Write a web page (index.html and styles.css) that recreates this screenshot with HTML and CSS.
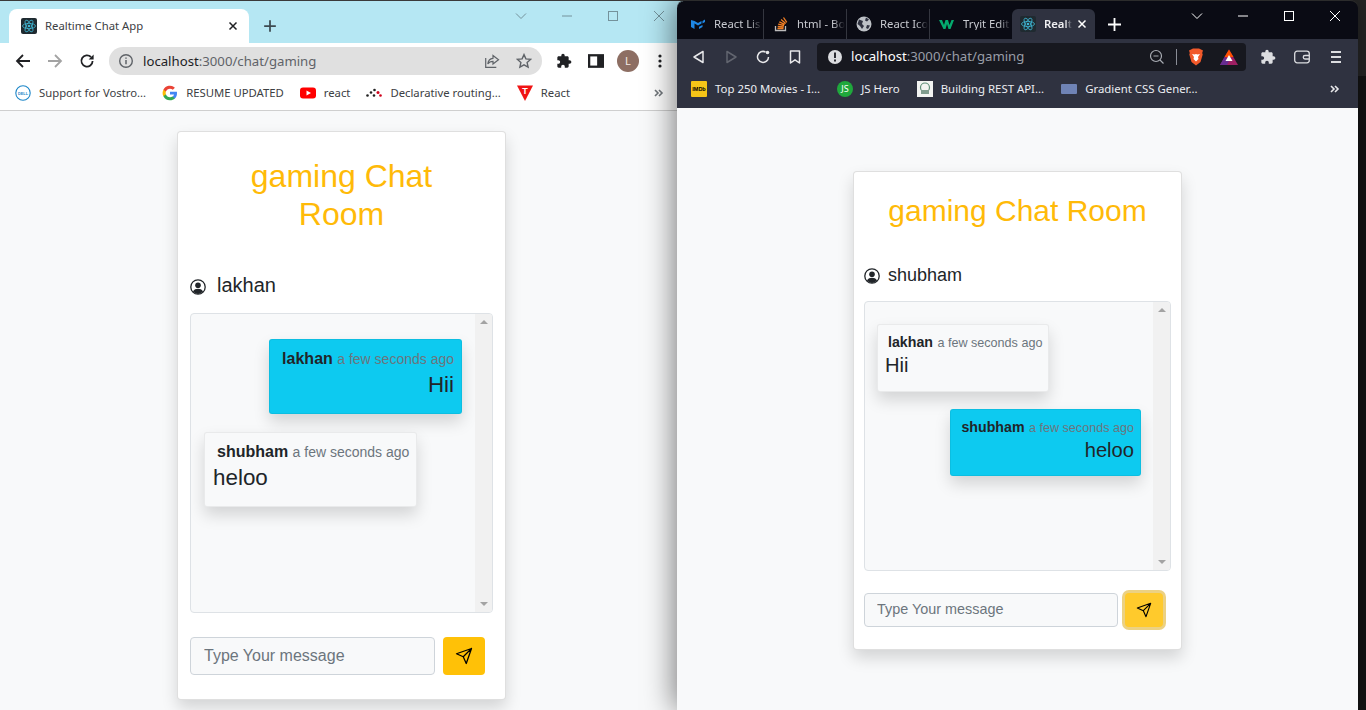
FILE: index.html
```html
<!DOCTYPE html>
<html lang="en">
<head>
<meta charset="utf-8">
<title>Realtime Chat App</title>
<link rel="stylesheet" href="styles.css">
</head>
<body>
<svg class="defs" width="0" height="0" aria-hidden="true">
  <symbol id="react" viewBox="0 0 16 16">
    <rect width="16" height="16" rx="2" fill="#1f2a30"/>
    <g fill="none" stroke="#3fb6d3" stroke-width=".8">
      <ellipse cx="8" cy="8" rx="6.5" ry="2.6"/>
      <ellipse cx="8" cy="8" rx="6.5" ry="2.6" transform="rotate(60 8 8)"/>
      <ellipse cx="8" cy="8" rx="6.5" ry="2.6" transform="rotate(120 8 8)"/>
    </g>
    <circle cx="8" cy="8" r="1.3" fill="#3fb6d3"/>
  </symbol>
  <symbol id="puzzle" viewBox="0 0 24 24">
    <path d="M20.5 11H19V7c0-1.1-.9-2-2-2h-4V3.5C13 2.12 11.88 1 10.5 1S8 2.12 8 3.5V5H4c-1.1 0-1.99.9-1.99 2v3.8H3.5c1.49 0 2.7 1.21 2.7 2.7s-1.21 2.7-2.7 2.7H2V20c0 1.1.9 2 2 2h3.8v-1.5c0-1.49 1.21-2.7 2.7-2.7 1.49 0 2.7 1.21 2.7 2.7V22H17c1.1 0 2-.9 2-2v-4h1.5c1.38 0 2.5-1.12 2.5-2.5S21.88 11 20.5 11z" fill="currentColor"/>
  </symbol>
  <symbol id="user" viewBox="0 0 16 16">
    <circle cx="8" cy="8" r="7.2" fill="#fff" stroke="#212529" stroke-width="1.3"/>
    <circle cx="8" cy="6.2" r="2.8" fill="#212529"/>
    <path d="M2.9 12.6C4 10.5 6 9.8 8 9.8s4 .7 5.1 2.8A7 7 0 0 1 8 15a7 7 0 0 1-5.1-2.4z" fill="#212529"/>
  </symbol>
  <symbol id="send" viewBox="0 0 24 24">
    <path d="M22 2 11 13M22 2l-7 20-4-9-9-4z" fill="none" stroke="currentColor" stroke-width="1.7" stroke-linejoin="round" stroke-linecap="round"/>
  </symbol>
  <symbol id="chev" viewBox="0 0 12 12"><path d="M1 3.5l5 5 5-5" fill="none" stroke="currentColor"/></symbol>
  <symbol id="min" viewBox="0 0 12 12"><path d="M1 6h10" fill="none" stroke="currentColor"/></symbol>
  <symbol id="max" viewBox="0 0 12 12"><rect x="1.5" y="1.5" width="9" height="9" fill="none" stroke="currentColor"/></symbol>
  <symbol id="close" viewBox="0 0 12 12"><path d="M1 1l10 10M11 1L1 11" fill="none" stroke="currentColor"/></symbol>
  <symbol id="more" viewBox="0 0 10 10"><path d="M1 2l3 3-3 3M5 2l3 3-3 3" fill="none" stroke="currentColor" stroke-width="1.6"/></symbol>
</svg>

<main class="desktop">

  <section class="window window-light">
    <div class="strip strip-light">
      <div class="tab-light">
        <svg class="ico16"><use href="#react"/></svg>
        <span class="tab-light-title">Realtime Chat App</span>
        <svg class="tab-x" viewBox="0 0 10 10"><path d="M1.5 1.5l7 7M8.5 1.5l-7 7" stroke="#202124" stroke-width="1.5"/></svg>
      </div>
      <svg class="plus plus-light" viewBox="0 0 12 12"><path d="M6 1v10M1 6h10" stroke="#3c4a50" stroke-width="1.5"/></svg>
      <div class="spacer"></div>
      <div class="controls controls-light">
        <span class="ctl"><svg class="ico12"><use href="#chev"/></svg></span>
        <span class="ctl"><svg class="ico12"><use href="#min"/></svg></span>
        <span class="ctl"><svg class="ico12"><use href="#max"/></svg></span>
        <span class="ctl"><svg class="ico12"><use href="#close"/></svg></span>
      </div>
    </div>
    <div class="toolbar toolbar-light">
      <span class="btn"><svg class="ico16" viewBox="0 0 16 16"><path d="M15 8H2M8 2L2 8l6 6" fill="none" stroke="#202124" stroke-width="1.8"/></svg></span>
      <span class="btn"><svg class="ico16" viewBox="0 0 16 16"><path d="M1 8h13M8 2l6 6-6 6" fill="none" stroke="#a3a3a3" stroke-width="1.8"/></svg></span>
      <span class="btn"><svg class="ico16" viewBox="0 0 16 16"><path d="M13.6 8a5.6 5.6 0 1 1-1.6-4" fill="none" stroke="#202124" stroke-width="1.8"/><path d="M14.6 1.4v5h-5z" fill="#202124"/></svg></span>
      <div class="omni omni-light">
        <svg class="ico16 omni-ico" viewBox="0 0 16 16"><circle cx="8" cy="8" r="6.3" fill="none" stroke="#5f6368" stroke-width="1.4"/><path d="M8 7v4.2M8 4.4v1.4" stroke="#5f6368" stroke-width="1.5"/></svg>
        <span class="url url-light"><span class="url-host-light">localhost</span>:3000/chat/gaming</span>
        <span class="btn"><svg class="ico16" viewBox="0 0 16 16"><path d="M9 2.5l5.5 4.3L9 11V8.3c-2.6 0-4 .8-5.2 2.7.3-3.2 2-5.4 5.2-5.7zM1.7 5v9.3h10.6" fill="none" stroke="#5f6368" stroke-width="1.2"/></svg></span>
        <span class="btn"><svg class="ico16" viewBox="0 0 16 16"><path d="M8 1.6l1.9 4.3 4.7.5-3.5 3.1 1 4.6L8 11.8l-4.1 2.3 1-4.6L1.4 6.4l4.7-.5z" fill="none" stroke="#5f6368" stroke-width="1.4"/></svg></span>
      </div>
      <div class="tool-right">
        <span class="btn btn-dark"><svg class="ico16"><use href="#puzzle"/></svg></span>
        <span class="btn"><svg class="ico16" viewBox="0 0 14 14"><rect x="0" y="1" width="14" height="12" fill="#202124"/><rect x="2" y="3" width="6" height="8" fill="#fff"/></svg></span>
        <span class="btn"><span class="avatar">L</span></span>
        <span class="btn"><svg class="ico16" viewBox="0 0 16 16"><circle cx="8" cy="3" r="1.6" fill="#202124"/><circle cx="8" cy="8" r="1.6" fill="#202124"/><circle cx="8" cy="13" r="1.6" fill="#202124"/></svg></span>
      </div>
    </div>
    <div class="bookmarks bookmarks-light">
      <span class="mark">
        <svg class="ico16" viewBox="0 0 16 16"><circle cx="8" cy="8" r="7.2" fill="#fff" stroke="#1c86c8" stroke-width="1.1"/><text x="8" y="9.8" class="svg-dell">DELL</text></svg>
        <span>Support for Vostro...</span>
      </span>
      <span class="mark">
        <svg class="ico16" viewBox="0 0 16 16">
          <path d="M15 8.2c0-.5 0-1-.1-1.4H8v2.8h4a3.400 3.400 0 0 1-1.500 2.200v1.800h2.400C14.200 12.400 15 10.500 15 8.200z" fill="#4285f4"/>
          <path d="M8 15.200c2 0 3.600-.7 4.900-1.800l-2.400-1.800c-.7.400-1.500.7-2.500.7-1.900 0-3.500-1.300-4.100-3H1.400v1.900A7.200 7.200 0 0 0 8 15.200z" fill="#34a853"/>
          <path d="M3.900 9.300a4.300 4.300 0 0 1 0-2.700V4.700H1.400a7.200 7.200 0 0 0 0 6.500z" fill="#fbbc05"/>
          <path d="M8 3.700c1.100 0 2 .4 2.800 1.100l2.100-2.100A7.200 7.200 0 0 0 1.400 4.700l2.500 1.900c.6-1.700 2.200-2.900 4.100-2.900z" fill="#ea4335"/>
        </svg>
        <span>RESUME UPDATED</span>
      </span>
      <span class="mark">
        <svg class="ico16" viewBox="0 0 16 16"><rect x="0" y="2.500" width="16" height="11" rx="3" fill="#f00"/><path d="M6.500 5.500v5L11 8z" fill="#fff"/></svg>
        <span>react</span>
      </span>
      <span class="mark">
        <svg class="ico16" viewBox="0 0 16 16"><circle cx="1.500" cy="10.500" r="1.300" fill="#222"/><circle cx="5" cy="7.500" r="1.300" fill="#222"/><circle cx="8.500" cy="5" r="1.300" fill="#222"/><circle cx="8" cy="10.500" r="1.300" fill="#222"/><circle cx="12" cy="7.500" r="1.500" fill="#d0021b"/><circle cx="14.500" cy="10.500" r="1.300" fill="#d0021b"/></svg>
        <span>Declarative routing...</span>
      </span>
      <span class="mark">
        <svg class="ico16" viewBox="0 0 16 16"><path d="M0 .5h16L8 16z" fill="#f01414"/><text x="8" y="8.500" class="svg-t">T</text></svg>
        <span>React</span>
      </span>
      <div class="spacer"></div>
      <svg class="more more-light"><use href="#more"/></svg>
    </div>
    <div class="page page-left">
      <article class="card">
        <h2 class="room-title">gaming Chat Room</h2>
        <div class="user-row">
          <svg class="user-ico"><use href="#user"/></svg>
          <span>lakhan</span>
        </div>
        <div class="chat-box">
          <div class="messages">
            <div class="bubble bubble-own">
              <div class="meta"><b class="who">lakhan</b> <span class="when">a few seconds ago</span></div>
              <div class="text">Hii</div>
            </div>
            <div class="bubble bubble-other">
              <div class="meta"><b class="who">shubham</b> <span class="when">a few seconds ago</span></div>
              <div class="text">heloo</div>
            </div>
          </div>
          <div class="scrollbar"><i class="arrow-up"></i><i class="arrow-down"></i></div>
        </div>
        <div class="composer">
          <input class="composer-input" type="text" placeholder="Type Your message">
          <button class="send" type="button"><svg class="send-ico"><use href="#send"/></svg></button>
        </div>
      </article>
    </div>
  </section>

  <section class="window window-dark">
    <div class="strip strip-dark">
      <div class="tab-dark">
        <svg class="ico16" viewBox="0 0 16 16"><path d="M1 4v7l3.500 2V7.500L8 9.500l3.500-2V5L8 7 4.500 5zM12.500 5v2.500L15 6V3.500zM12.500 9v2L9 13v-2.300z" fill="#1e88e5"/></svg>
        <span class="tab-dark-title">React Lis</span>
      </div>
      <div class="tab-dark">
        <svg class="ico16" viewBox="0 0 16 16"><path d="M2.500 10v4.500h10V10" fill="none" stroke="#bcbbbb" stroke-width="1.300"/><path d="M4.500 12.500h6M4.700 10.500l6 .5M5.200 8.200l5.900 1.300M6.300 5.800l5.400 2.600M8.100 3.500l4.600 3.900M10.500 1.500l3.300 4.900" stroke="#f48024" stroke-width="1.300" fill="none"/></svg>
        <span class="tab-dark-title">html - Bo</span>
      </div>
      <div class="tab-dark">
        <svg class="ico16" viewBox="0 0 16 16"><circle cx="8" cy="8" r="7.500" fill="#bdc1c6"/><path d="M3 3.500l4 1.500-1 3 2 2-2 3-2-3-2.500-2zM10 1.500l3 2-2 2-2-1zM11 9l3 .5-2 3.500-2-1z" fill="#2f3240"/></svg>
        <span class="tab-dark-title">React Ico</span>
      </div>
      <div class="tab-dark">
        <svg class="ico16" viewBox="0 0 16 16"><path d="M0 4h3l2 5 1.500-5h2.500l1.500 5 2-5H15l-3.500 9H9.500L8 8l-1.500 5h-2z" fill="#04aa6d"/></svg>
        <span class="tab-dark-title">Tryit Edit</span>
      </div>
      <div class="tab-dark tab-dark-active">
        <svg class="ico16"><use href="#react"/></svg>
        <span class="tab-dark-title tab-active-title">Realt</span>
        <svg class="tab-x tab-x-dark" viewBox="0 0 10 10"><path d="M1.500 1.500l7 7M8.500 1.500l-7 7" stroke="#fff" stroke-width="1.500"/></svg>
      </div>
      <svg class="plus plus-dark" viewBox="0 0 12 12"><path d="M6 0v12M0 6h12" stroke="#fff" stroke-width="1.700"/></svg>
      <div class="spacer"></div>
      <div class="controls controls-dark">
        <span class="ctl"><svg class="ico12"><use href="#chev"/></svg></span>
        <span class="ctl"><svg class="ico12"><use href="#min"/></svg></span>
        <span class="ctl"><svg class="ico12"><use href="#max"/></svg></span>
        <span class="ctl"><svg class="ico12"><use href="#close"/></svg></span>
      </div>
    </div>
    <div class="toolbar toolbar-dark">
      <span class="btn"><svg class="ico16" viewBox="0 0 16 16"><path d="M12 2.500v11L3 8z" fill="none" stroke="#e8e8ea" stroke-width="1.500" stroke-linejoin="round"/></svg></span>
      <span class="btn"><svg class="ico16" viewBox="0 0 16 16"><path d="M4 2.500v11L13 8z" fill="none" stroke="#62656f" stroke-width="1.500" stroke-linejoin="round"/></svg></span>
      <span class="btn"><svg class="ico16" viewBox="0 0 16 16"><path d="M13.500 8A5.500 5.500 0 1 1 10.500 3" fill="none" stroke="#e8e8ea" stroke-width="1.500"/><circle cx="12.500" cy="3.500" r="1.800" fill="#e8e8ea"/></svg></span>
      <span class="btn"><svg class="ico16" viewBox="0 0 16 16"><path d="M3.500 2h9v12L8 10.800 3.500 14z" fill="none" stroke="#e8e8ea" stroke-width="1.500" stroke-linejoin="round"/></svg></span>
      <div class="omni omni-dark">
        <svg class="ico16 omni-ico-dark" viewBox="0 0 16 16"><circle cx="8" cy="8" r="7" fill="#dcdde0"/><path d="M8 3.500v5.500M8 10.500v2" stroke="#17181f" stroke-width="1.800"/></svg>
        <span class="url url-dark"><span class="url-host-dark">localhost</span>:3000/chat/gaming</span>
        <span class="btn"><svg class="ico16" viewBox="0 0 16 16"><circle cx="7" cy="7" r="5.500" fill="none" stroke="#a8abb2" stroke-width="1.200"/><path d="M4.500 7h5M11 11l3.500 3.500" stroke="#a8abb2" stroke-width="1.200"/></svg></span>
        <i class="omni-sep"></i>
        <span class="btn btn-brave"><svg class="ico18" viewBox="0 0 16 18"><path d="M3 1.500L5 .5h6l2 1 2 1-.8 2.500.5 1.500L12.500 14 8 17.500 3.500 14 1.300 6.500 1.800 5 1 2.500z" fill="#f1592a"/><path d="M4 6l2.500.5L8 6l1.500.5L12 6l-2 3 .5 2L8 13.500 5.500 11l.5-2z" fill="#fff"/></svg></span>
        <span class="btn"><svg class="ico18" viewBox="0 0 18 16"><path d="M9 .5L18 16H0z" fill="#9e1f63"/><path d="M9 .5L13.500 8h-9z" fill="#ff5000"/><path d="M0 16l4.500-8L9 12l-2 4z" fill="#662d91"/><path d="M9 6l3.500 6h-7z" fill="#fff"/></svg></span>
      </div>
      <div class="tool-right-dark">
        <span class="btn-wide btn-light"><svg class="ico16"><use href="#puzzle"/></svg></span>
        <span class="btn-wide"><svg class="ico16" viewBox="0 0 16 16"><rect x=".7" y="2.200" width="14.600" height="11.600" rx="2.500" fill="none" stroke="#dcdde0" stroke-width="1.300"/><path d="M15 6.500H11a1.500 1.500 0 0 0 0 3.500h4" fill="none" stroke="#dcdde0" stroke-width="1.300"/></svg></span>
        <span class="btn-wide"><svg class="ico16" viewBox="0 0 16 16"><path d="M3 3h10M3 8h10M3 13h10" stroke="#dcdde0" stroke-width="1.800"/></svg></span>
      </div>
    </div>
    <div class="bookmarks bookmarks-dark">
      <span class="mark">
        <svg class="ico16" viewBox="0 0 16 16"><rect width="16" height="16" rx="1" fill="#f5c518"/><text x="8" y="10" class="svg-imdb">IMDb</text></svg>
        <span>Top 250 Movies - I...</span>
      </span>
      <span class="mark">
        <svg class="ico16" viewBox="0 0 16 16"><circle cx="8" cy="8" r="8" fill="#1fa83c"/><text x="8" y="11" class="svg-js">JS</text></svg>
        <span>JS Hero</span>
      </span>
      <span class="mark">
        <svg class="ico16" viewBox="0 0 16 16"><rect width="16" height="16" fill="#f2f4f2"/><circle cx="8" cy="6.500" r="4.500" fill="none" stroke="#5e8f78" stroke-width="1.200"/><rect x="4" y="9" width="8" height="4" fill="#7f9c8e"/></svg>
        <span>Building REST API...</span>
      </span>
      <span class="mark">
        <svg class="ico16" viewBox="0 0 16 16"><rect x="0" y="3" width="16" height="10" rx="1" fill="#6f83b5"/></svg>
        <span>Gradient CSS Gener...</span>
      </span>
      <div class="spacer"></div>
      <svg class="more more-dark"><use href="#more"/></svg>
    </div>
    <div class="page page-right">
      <article class="card card-small">
        <h2 class="room-title room-title-small">gaming Chat Room</h2>
        <div class="user-row user-row-small">
          <svg class="user-ico"><use href="#user"/></svg>
          <span>shubham</span>
        </div>
        <div class="chat-box chat-box-small">
          <div class="messages messages-small">
            <div class="bubble bubble-other bubble-small">
              <div class="meta"><b class="who">lakhan</b> <span class="when">a few seconds ago</span></div>
              <div class="text">Hii</div>
            </div>
            <div class="bubble bubble-own bubble-small">
              <div class="meta"><b class="who">shubham</b> <span class="when">a few seconds ago</span></div>
              <div class="text">heloo</div>
            </div>
          </div>
          <div class="scrollbar"><i class="arrow-up"></i><i class="arrow-down"></i></div>
        </div>
        <div class="composer composer-small">
          <input class="composer-input" type="text" placeholder="Type Your message">
          <button class="send send-focus" type="button"><svg class="send-ico"><use href="#send"/></svg></button>
        </div>
      </article>
    </div>
  </section>

</main>
</body>
</html>
```

FILE: styles.css
```css
* { box-sizing: border-box; }
html, body { margin: 0; height: 100%; overflow: hidden; }
body { font-family: "Liberation Sans", Arial, sans-serif; color: #212529; }
.defs { position: absolute; }

.desktop {
  position: relative;
  width: 1366px;
  height: 710px;
  overflow: hidden;
  background: linear-gradient(#262626 76px, #141414 76px);
}
.window {
  position: absolute;
  top: 0;
  height: 710px;
  display: flex;
  flex-direction: column;
}
.window-light { left: 0; width: 683px; border-top: 1px solid #3a3a3a; }
.window-dark {
  left: 677px;
  width: 681px;
  border-top: 1px solid #2c2c2c;
  border-radius: 8px 8px 0 0;
  overflow: hidden;
  box-shadow: -3px 0 30px rgba(0, 0, 0, .5);
}

.spacer { flex: 1; }
.ico16 { width: 16px; height: 16px; flex: none; }
.ico12 { width: 12px; height: 12px; }
.ico18 { width: 18px; height: 18px; flex: none; }

.strip { display: flex; align-items: flex-end; flex: none; }
.strip-light { height: 42px; background: #b5e7f3; }
.strip-dark { height: 38px; background: #0a0b14; }

.tab-light {
  width: 240px;
  height: 34px;
  margin-left: 9px;
  padding: 0 11px 0 12px;
  display: flex;
  align-items: center;
  background: #fff;
  border-radius: 8px 8px 0 0;
  font: 11.3px/1 "Noto Sans", sans-serif;
  color: #3c4043;
}
.tab-light-title { flex: 1; margin-left: 8px; }
.tab-x { width: 10px; height: 10px; flex: none; }
.plus { flex: none; align-self: center; }
.plus-light { width: 14px; height: 14px; margin: 8px 0 0 14px; }
.plus-dark { width: 13px; height: 13px; margin: 8px 0 0 13px; }

.controls { display: flex; align-self: flex-start; height: 30px; margin-top: 0; }
.controls-light { color: #74929b; margin-right: 1px; }
.controls-dark { color: #fff; }
.ctl { width: 46px; height: 30px; display: flex; align-items: center; justify-content: center; }

.tab-dark {
  width: 83px;
  height: 30px;
  padding-left: 9px;
  display: flex;
  align-items: center;
  font: 11.3px/1 "Noto Sans", sans-serif;
  color: #c8cad0;
  border-right: 1px solid #34363f;
}
.tab-dark:first-child { margin-left: 4px; }
.tab-dark:nth-child(4) { border-right: 0; }
.tab-dark-title {
  margin-left: 8px;
  white-space: nowrap;
  width: 48px;
  -webkit-mask-image: linear-gradient(90deg, #000 75%, transparent);
  mask-image: linear-gradient(90deg, #000 75%, transparent);
}
.tab-dark-active {
  background: #2f3240;
  border-right: 0;
  border-radius: 6px 6px 0 0;
  margin-left: -1px;
  padding-left: 8px;
  font-weight: 600;
  color: #f0f0f2;
}
.tab-active-title { width: 28px; flex: none; }
.tab-x-dark { margin-left: 5px; }

.toolbar { display: flex; align-items: center; flex: none; padding-top: 3px; }
.toolbar-light { height: 33px; padding-left: 7px; background: #fff; }
.toolbar-dark { height: 33px; padding-left: 6px; background: #2f3240; }
.btn { width: 32px; height: 28px; display: flex; align-items: center; justify-content: center; flex: none; }
.btn-wide { width: 34px; height: 28px; display: flex; align-items: center; justify-content: center; flex: none; }
.btn-dark { color: #202124; }
.btn-light { color: #dcdde0; }
.btn-brave { width: 34px; }

.omni { display: flex; align-items: center; height: 28px; margin-left: 6px; flex: none; }
.omni-light { width: 433px; padding: 0 2px 0 9px; background: #e0e0e0; border-radius: 14px; }
.omni-dark { width: 429px; padding: 0 1px 0 10px; background: #17181f; border-radius: 4px; }
.url { flex: 1; font: 13.2px/1 "Noto Sans", sans-serif; white-space: nowrap; }
.url-light { margin: 2px 0 0 9px; color: #5f6368; }
.url-host-light { color: #202124; }
.url-dark { margin-left: 8px; color: #9a9ea8; }
.url-host-dark { color: #fff; }
.omni-sep { width: 1px; height: 16px; margin: 0 2px 0 3px; background: #8a8d96; flex: none; }

.tool-right { display: flex; margin-left: 6px; }
.tool-right-dark { display: flex; margin-left: 5px; }
.avatar {
  width: 22px;
  height: 22px;
  border-radius: 50%;
  background: #8d6e63;
  color: #f3e9e4;
  font: 11px/22px "Noto Sans", sans-serif;
  text-align: center;
}

.bookmarks {
  display: flex;
  align-items: center;
  flex: none;
  font: 11.3px/1 "Noto Sans", sans-serif;
  white-space: nowrap;
}
.bookmarks-light { height: 35px; padding-left: 15px; background: #fff; border-bottom: 1px solid #cfcfcf; color: #3c4043; }
.bookmarks-dark { height: 36px; padding: 0 0 2px 14px; background: #2f3240; color: #eceef2; font-size: 11.4px; }
.mark { display: flex; align-items: center; gap: 8px; margin-right: 16px; }
.bookmarks-dark .mark { margin-right: 17px; }
.more { width: 10px; height: 10px; flex: none; }
.more-light { color: #70757a; margin-right: 19px; }
.more-dark { color: #e8e8ea; margin-right: 18px; }
.svg-dell { font: bold 3.8px "Liberation Sans", sans-serif; fill: #1c86c8; text-anchor: middle; }
.svg-t { font: bold 9px "Liberation Sans", sans-serif; fill: #fff; text-anchor: middle; }
.svg-imdb { font: bold 5.5px "Liberation Sans", sans-serif; fill: #000; text-anchor: middle; }
.svg-js { font: 9px "Noto Sans", sans-serif; fill: #fff; text-anchor: middle; }

.page { flex: 1; min-height: 0; background: #f8f9fa; display: flex; justify-content: center; align-items: flex-start; }
.page-left { padding-top: 20px; }
.page-right { padding-top: 63px; }

.card {
  width: 329px;
  padding: 0 12px 24px;
  background: #fff;
  border: 1px solid rgba(0, 0, 0, .125);
  border-radius: 4px;
  box-shadow: 0 8px 16px rgba(0, 0, 0, .15);
  flex: none;
}
.card-small { padding: 0 10px 22px; }

.room-title {
  margin: 0;
  padding: 25px 40px 37px;
  font-size: 32px;
  line-height: 38.4px;
  font-weight: 400;
  text-align: center;
  color: #ffba08;
}
.room-title-small { padding: 21px 0 33px; font-size: 30px; line-height: 36px; }

.user-row { display: flex; align-items: center; gap: 11px; height: 30px; font-size: 20px; margin-bottom: 12px; }
.user-row-small { gap: 8px; height: 26px; font-size: 18px; margin-bottom: 13px; }
.user-ico { width: 16px; height: 16px; margin-top: 3px; flex: none; }
.user-row-small .user-ico { margin-top: 2px; }

.chat-box {
  display: flex;
  height: 300px;
  margin-bottom: 24px;
  background: #f8f9fa;
  border: 1px solid #dee2e6;
  border-radius: 4px;
  overflow: hidden;
}
.chat-box-small { height: 270px; margin-bottom: 22px; }
.messages { flex: 1; min-width: 0; display: flex; flex-direction: column; align-items: flex-start; gap: 18px; padding: 25px 13px 0; }
.messages-small { gap: 17px; padding: 22px 12px 0; }

.bubble {
  padding: 7px 7px 15px 8px;
  border: 1px solid rgba(0, 0, 0, .06);
  border-radius: 3px;
  box-shadow: 0 8px 16px rgba(0, 0, 0, .15);
  white-space: nowrap;
}
.bubble-own { align-self: flex-end; background: #0dcaf0; text-align: right; }
.bubble-other { background: #f8f9fa; }
.bubble-small { padding: 7px 6px 14px 7px; }
.bubble-small.bubble-own { padding-bottom: 13px; }

.meta { line-height: 24px; padding-left: 4px; }
.who { font-size: 16px; }
.when { font-size: 14px; color: #6c757d; }
.text { font-size: 22.4px; line-height: 27px; }
.bubble-small .meta { line-height: 20px; padding-left: 3px; }
.bubble-small .who { font-size: 14.2px; }
.bubble-small .when { font-size: 12.6px; }
.bubble-small .text { font-size: 20.16px; line-height: 24px; }

.scrollbar {
  width: 17px;
  flex: none;
  padding: 6px 0;
  display: flex;
  flex-direction: column;
  justify-content: space-between;
  align-items: center;
  background: #f1f1f1;
}
.arrow-up { border: 4px solid transparent; border-top: 0; border-bottom: 4px solid #a3a3a3; }
.arrow-down { border: 4px solid transparent; border-bottom: 0; border-top: 4px solid #a3a3a3; }

.composer { display: flex; align-items: center; gap: 8px; padding-right: 8px; }
.composer-input {
  flex: 1;
  min-width: 0;
  height: 38px;
  padding: 0 12px 0 13px;
  background: #f8f9fa;
  border: 1px solid #ced4da;
  border-radius: 4px;
  font: 16px "Liberation Sans", sans-serif;
  outline: 0;
}
.composer-input::placeholder { color: #6c757d; opacity: 1; }
.send {
  width: 42px;
  height: 38px;
  padding: 0;
  display: flex;
  align-items: center;
  justify-content: center;
  background: #ffc107;
  border: 0;
  border-radius: 4px;
  color: #000;
  flex: none;
}
.send-ico { width: 18px; height: 18px; }

.composer-small { gap: 7px; padding-right: 8px; }
.composer-small .composer-input { height: 34px; font-size: 14.4px; padding: 0 12px 2px; }
.composer-small .send { width: 38px; height: 34px; }
.send-focus { background: #ffca2c; box-shadow: 0 0 0 3px rgba(217, 164, 6, .5); }
.composer-small .send-ico { width: 16px; height: 16px; }
```
